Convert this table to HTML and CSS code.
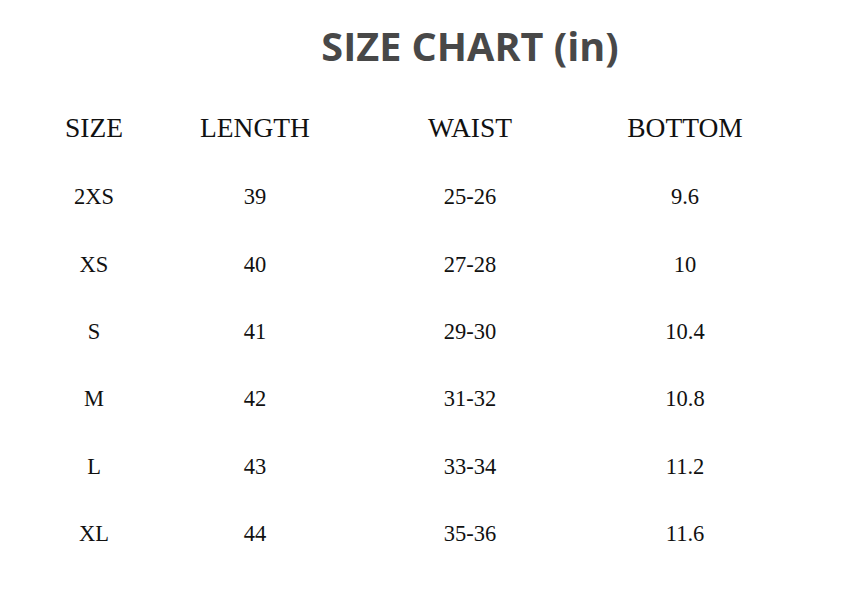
FILE: index.html
```
<!DOCTYPE html>
<html>
<head>
<meta charset="utf-8">
<link rel="stylesheet" href="styles.css">
</head>
<body>
<div class="page">
  <h1 class="title">SIZE CHART (in)</h1>
  <div class="chart">
    <div class="cell head">SIZE</div>
    <div class="cell head">LENGTH</div>
    <div class="cell head">WAIST</div>
    <div class="cell head">BOTTOM</div>

    <div class="cell">2XS</div><div class="cell">39</div><div class="cell">25-26</div><div class="cell">9.6</div>
    <div class="cell">XS</div><div class="cell">40</div><div class="cell">27-28</div><div class="cell">10</div>
    <div class="cell">S</div><div class="cell">41</div><div class="cell">29-30</div><div class="cell">10.4</div>
    <div class="cell">M</div><div class="cell">42</div><div class="cell">31-32</div><div class="cell">10.8</div>
    <div class="cell">L</div><div class="cell">43</div><div class="cell">33-34</div><div class="cell">11.2</div>
    <div class="cell">XL</div><div class="cell">44</div><div class="cell">35-36</div><div class="cell">11.6</div>
  </div>
</div>
</body>
</html>
```
FILE: styles.css
```
html, body {
  margin: 0;
  padding: 0;
  background: #ffffff;
}

.page {
  width: 849px;
  height: 616px;
  overflow: hidden;
}

.title {
  margin: 22px 0 0 0;
  padding-left: 91px;
  text-align: center;
  font-family: "Open Sans", "Liberation Sans", sans-serif;
  font-weight: 700;
  font-size: 39.6px;
  line-height: 48px;
  color: #484848;
}

.chart {
  margin-top: 43px;
  padding-left: 14px;
  display: grid;
  grid-template-columns: 160px 162px 268px 162px;
  grid-template-rows: 50.3px repeat(6, 67.4px);
  font-family: "Liberation Serif", "Times New Roman", serif;
  color: #111111;
}

.cell {
  text-align: center;
  font-size: 22.5px;
  line-height: 67.4px;
}

.chart .head {
  font-size: 27.5px;
  line-height: 30px;
  align-self: start;
}
```
